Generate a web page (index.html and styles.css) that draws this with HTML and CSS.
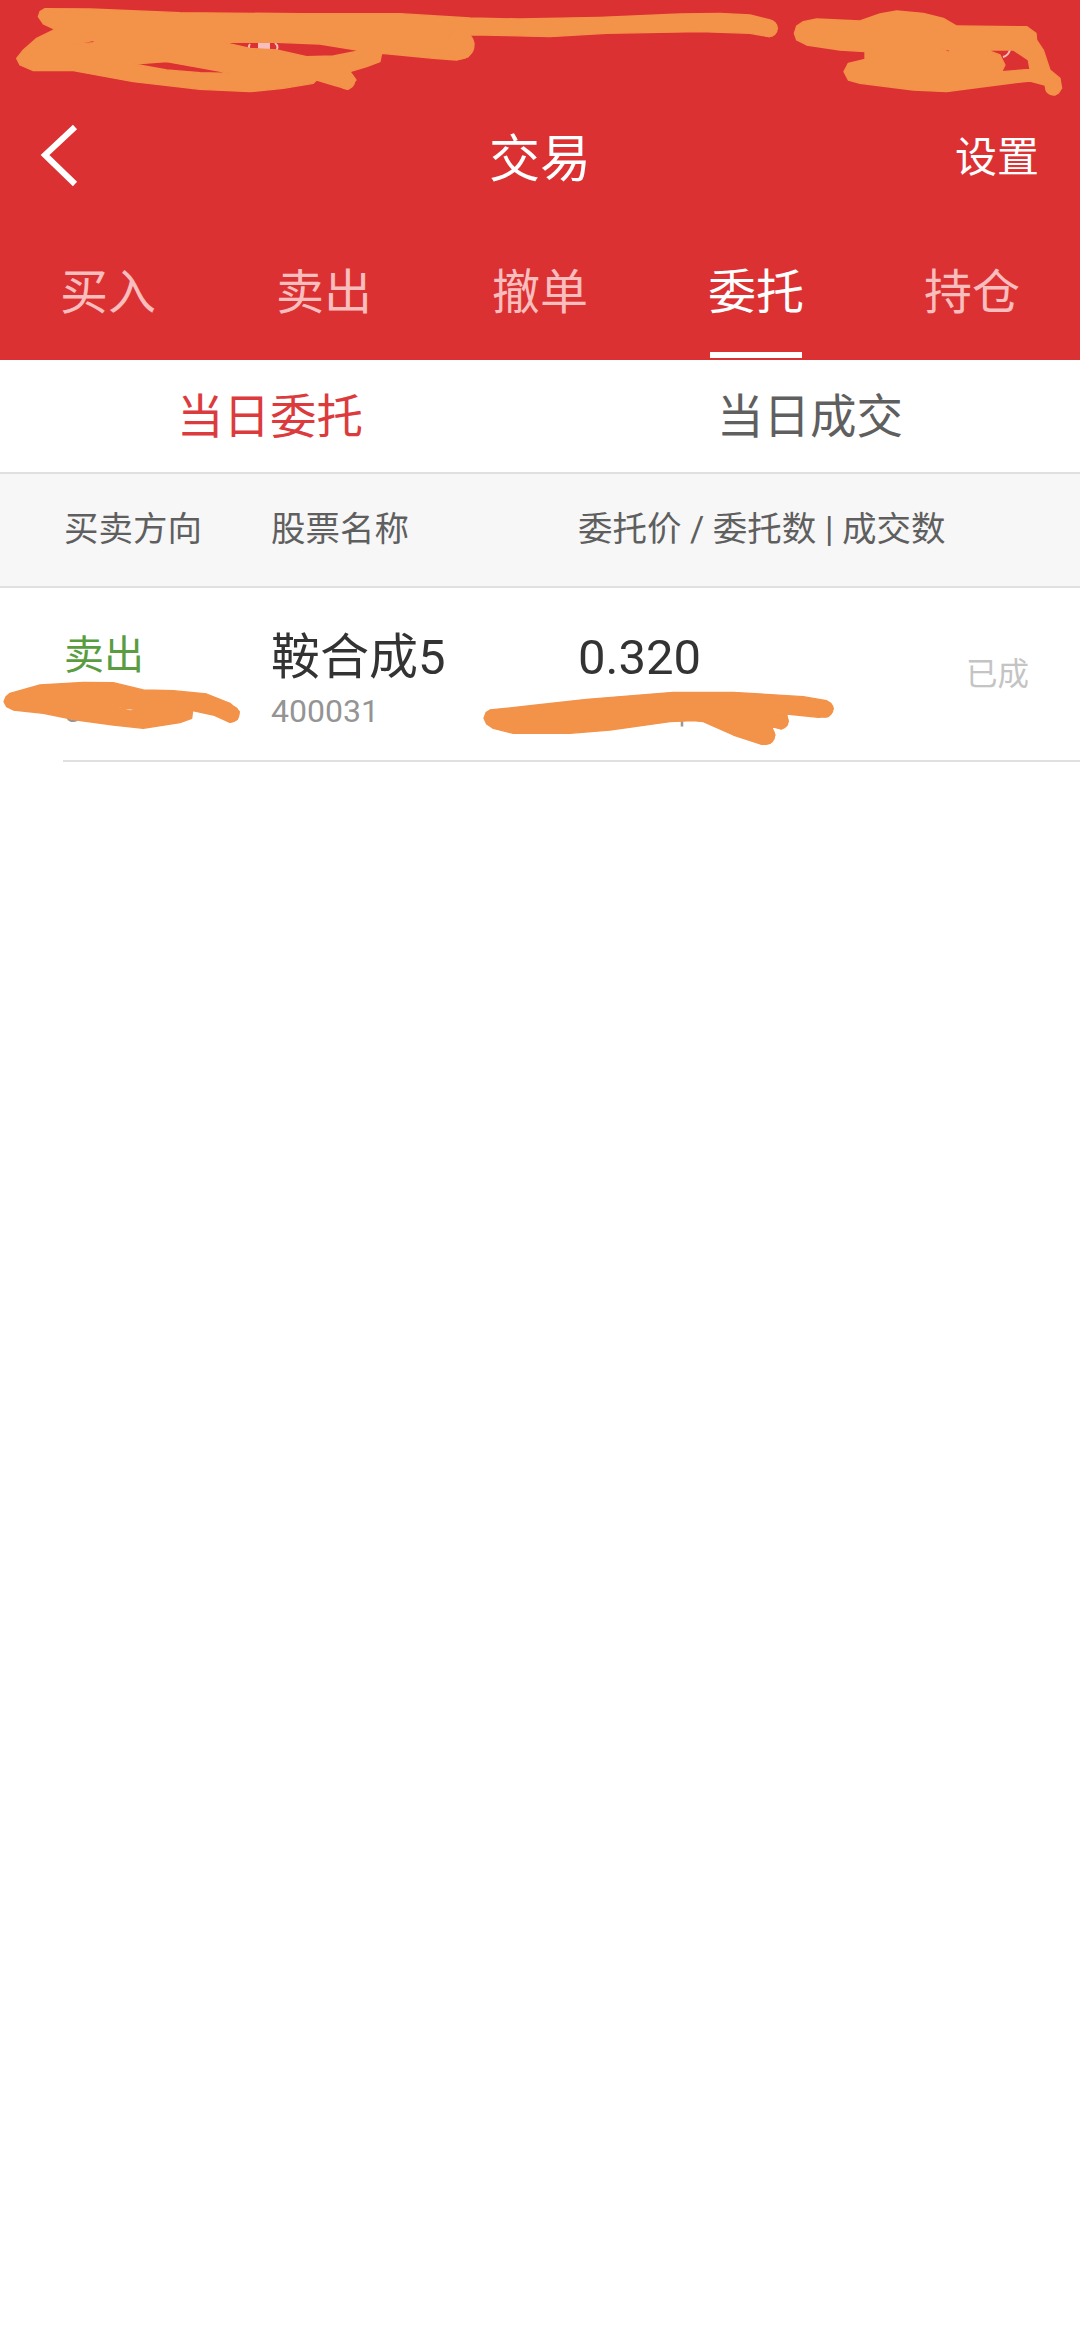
FILE: index.html
```html
<!DOCTYPE html>
<html lang="zh-CN">
<head>
    <meta charset="UTF-8">
    <meta name="viewport" content="width=device-width, initial-scale=1.0">
    <title>交易</title>
    <link rel="stylesheet" href="styles.css">
</head>
<body>
    <div class="page">
        <div class="header">
            <div class="status-bar"></div>
            <div class="toolbar">
                <svg class="back-icon" width="40" height="64" viewBox="0 0 40 64" fill="none" stroke="#fff" stroke-width="6">
                    <path d="M35 3 L5 31 L35 60"></path>
                </svg>
                <h1>交易</h1>
                <span class="settings">设置</span>
            </div>
            <div class="tabs">
                <div class="tab">买入</div>
                <div class="tab">卖出</div>
                <div class="tab">撤单</div>
                <div class="tab active">委托</div>
                <div class="tab">持仓</div>
            </div>
        </div>

        <div class="sub-tabs">
            <div class="sub-tab active">当日委托</div>
            <div class="sub-tab">当日成交</div>
        </div>

        <div class="table-head">
            <div class="col-side">买卖方向</div>
            <div class="col-name">股票名称</div>
            <div class="col-price">委托价 / 委托数 | 成交数</div>
        </div>

        <div class="order-row">
            <div class="col-side">
                <div class="side-sell">卖出</div>
                <div class="order-sub">0</div>
            </div>
            <div class="col-name">
                <div class="stock-name">鞍合成5</div>
                <div class="order-sub">400031</div>
            </div>
            <div class="col-price">
                <div class="price">0.320</div>
                <div class="order-sub qty-sep">|</div>
            </div>
            <div class="order-state">已成</div>
        </div>

        <!-- painted-over marks on top of the screenshot -->
        <svg class="scribbles" width="1080" height="800" viewBox="0 0 1080 800">
            <g class="status-hint">
                <rect x="258" y="43" width="12" height="7"></rect>
                <path d="M250 44 Q247 48 252 50 M275 43 Q280 47 275 52 M1010 50 Q1008 56 1003 57"></path>
            </g>
            <g transform="scale(.3333)">
                <path fill-rule="evenodd" d="M115 50 L120 35 L135 26 L270 27 L540 38 L900 41 L1200 41 L1410 54 L1560 57 L1800 52 L2040 42 L2160 40 L2250 45 L2310 60 L2333 85 L2308 110 L2250 100 L2100 95 L1820 100 L1650 110 L1450 105 L1400 105 L1422 130 L1405 170 L1370 180 L1300 175 L1200 165 L1145 160 L1140 185 L1100 200 L1050 215 L1068 240 L1045 268 L1000 255 L950 240 L940 250 L850 265 L750 275 L600 268 L400 245 L220 212 L100 212 L60 195 L50 175 L70 150 L110 115 L165 88 L130 72 Z
                    M197 135 L288 120 L280 128 Z
                    M400 192 L500 185 L600 203 L695 220 L600 218 L500 210 Z
                    M670 127 L830 127 L960 132 L1080 152 L1000 168 L920 170 L830 150 L750 145 Z"></path>
                <circle cx="2307" cy="85" r="25"></circle>
                <circle cx="1380" cy="135" r="42"></circle>
                <circle cx="1040" cy="243" r="24"></circle>
            </g>
            <g transform="translate(780) scale(.3333)">
                <path fill-rule="evenodd" d="M43 100 L50 78 L70 65 L110 57 L240 63 L300 42 L350 33 L430 40 L490 55 L530 78 L740 80 L768 100 L770 120 L790 150 L810 210 L840 235 L845 265 L825 285 L800 275 L795 255 L750 243 L650 255 L500 275 L400 270 L240 250 L205 240 L192 215 L205 190 L255 178 L255 155 L180 150 L80 135 L50 120 Z
                    M665 215 L750 208 L745 180 L700 150 L620 150 L660 165 L675 195 Z
                    M478 145 L510 150 L508 157 Z"></path>
                <circle cx="820" cy="262" r="23"></circle>
            </g>
            <g transform="translate(0 670) scale(.3333)">
                <path fill-rule="evenodd" d="M12 95 L18 80 L30 70 L120 45 L250 37 L340 38 L430 60 L520 62 L620 72 L690 100 L718 125 L712 148 L690 157 L640 135 L578 122 L575 145 L540 158 L430 175 L340 165 L230 150 L130 130 L40 120 L20 110 Z
                    M345 112 L425 120 L390 123 Z"></path>
                <circle cx="693" cy="132" r="24"></circle>
            </g>
            <g transform="translate(470 680) scale(.3333)">
                <path d="M42 115 L48 98 L60 90 L200 75 L350 58 L610 37 L790 37 L1000 50 L1070 62 L1090 85 L1075 110 L1045 112 L950 102 L955 125 L935 147 L905 140 L915 165 L900 190 L875 193 L790 165 L700 125 L670 122 L600 125 L420 150 L300 160 L130 160 L70 145 L50 132 Z"></path>
                <circle cx="1065" cy="87" r="24"></circle>
                <circle cx="933" cy="125" r="21"></circle>
                <circle cx="888" cy="167" r="26"></circle>
            </g>
        </svg>
    </div>
</body>
</html>
```

FILE: styles.css
```css
* {
    box-sizing: border-box;
    margin: 0;
    padding: 0;
}

body {
    background-color: #fff;
    color: #333;
    font-family: Roboto, 'Noto Sans CJK SC', sans-serif;
}

.page {
    position: relative;
    width: 1080px;
    height: 2340px;
    overflow: hidden;
}

/* Red header */
.header {
    background-color: #dc3133;
    color: #fff;
    height: 360px;
}

.status-bar {
    height: 96px;
}

.toolbar {
    position: relative;
    height: 120px;
    display: flex;
    align-items: center;
    justify-content: center;
    padding-bottom: 2px;
}

.toolbar h1 {
    font-size: 51px;
    font-weight: 400;
}

.back-icon {
    position: absolute;
    left: 40px;
    top: 28px;
}

.settings {
    position: absolute;
    right: 41px;
    top: 27px;
    font-size: 42px;
}

.tabs {
    display: grid;
    grid-template-columns: repeat(5, 1fr);
    height: 144px;
}

.tab {
    display: flex;
    align-items: center;
    justify-content: center;
    height: 144px;
    font-size: 48px;
    color: #f8bdbd;
}

.tab.active {
    position: relative;
    color: #fff;
}

.tab.active::after {
    content: '';
    position: absolute;
    left: 62px;
    right: 62px;
    bottom: 2px;
    height: 6px;
    background-color: #fff;
}

/* Sub tabs */
.sub-tabs {
    display: grid;
    grid-template-columns: 1fr 1fr;
    height: 114px;
    padding-bottom: 8px;
    border-bottom: 2px solid #e0e0e0;
}

.sub-tab {
    display: flex;
    align-items: center;
    justify-content: center;
    font-size: 46.5px;
    color: #5f5f5f;
}

.sub-tab.active {
    color: #dc3b3e;
}

/* Orders table */
.table-head {
    display: flex;
    align-items: center;
    height: 114px;
    padding-left: 64px;
    padding-bottom: 8px;
    background-color: #f7f7f7;
    border-bottom: 2px solid #e0e0e0;
    font-size: 34.5px;
    color: #5f5f5f;
}

.col-side {
    width: 207px;
}

.col-name {
    width: 307px;
}

.col-price {
    flex: 1;
}

.order-row {
    display: flex;
    align-items: flex-start;
    height: 174px;
    margin-left: 63px;
    padding: 42px 51px 0 1px;
    border-bottom: 2px solid #e0e0e0;
}

.side-sell {
    height: 56px;
    font-size: 40px;
    line-height: 52px;
    color: #5a9d41;
}

.stock-name,
.price {
    font-size: 49px;
    line-height: 56px;
}

.order-sub {
    margin-top: 3px;
    font-size: 32px;
    line-height: 44px;
    color: #949494;
}

.qty-sep {
    padding-left: 100px;
}

.order-state {
    margin-top: 23px;
    font-size: 31.5px;
    line-height: 44px;
    color: #c4c4c4;
}

/* Marks over the screenshot */
.scribbles {
    position: absolute;
    left: 0;
    top: 0;
    fill: #f39249;
    stroke: #f39249;
    stroke-width: 4;
    stroke-linejoin: round;
}

.status-hint rect {
    fill: #f8bdbd;
    stroke: none;
}

.status-hint path {
    fill: none;
    stroke: #f8bdbd;
    stroke-width: 2;
}
```
